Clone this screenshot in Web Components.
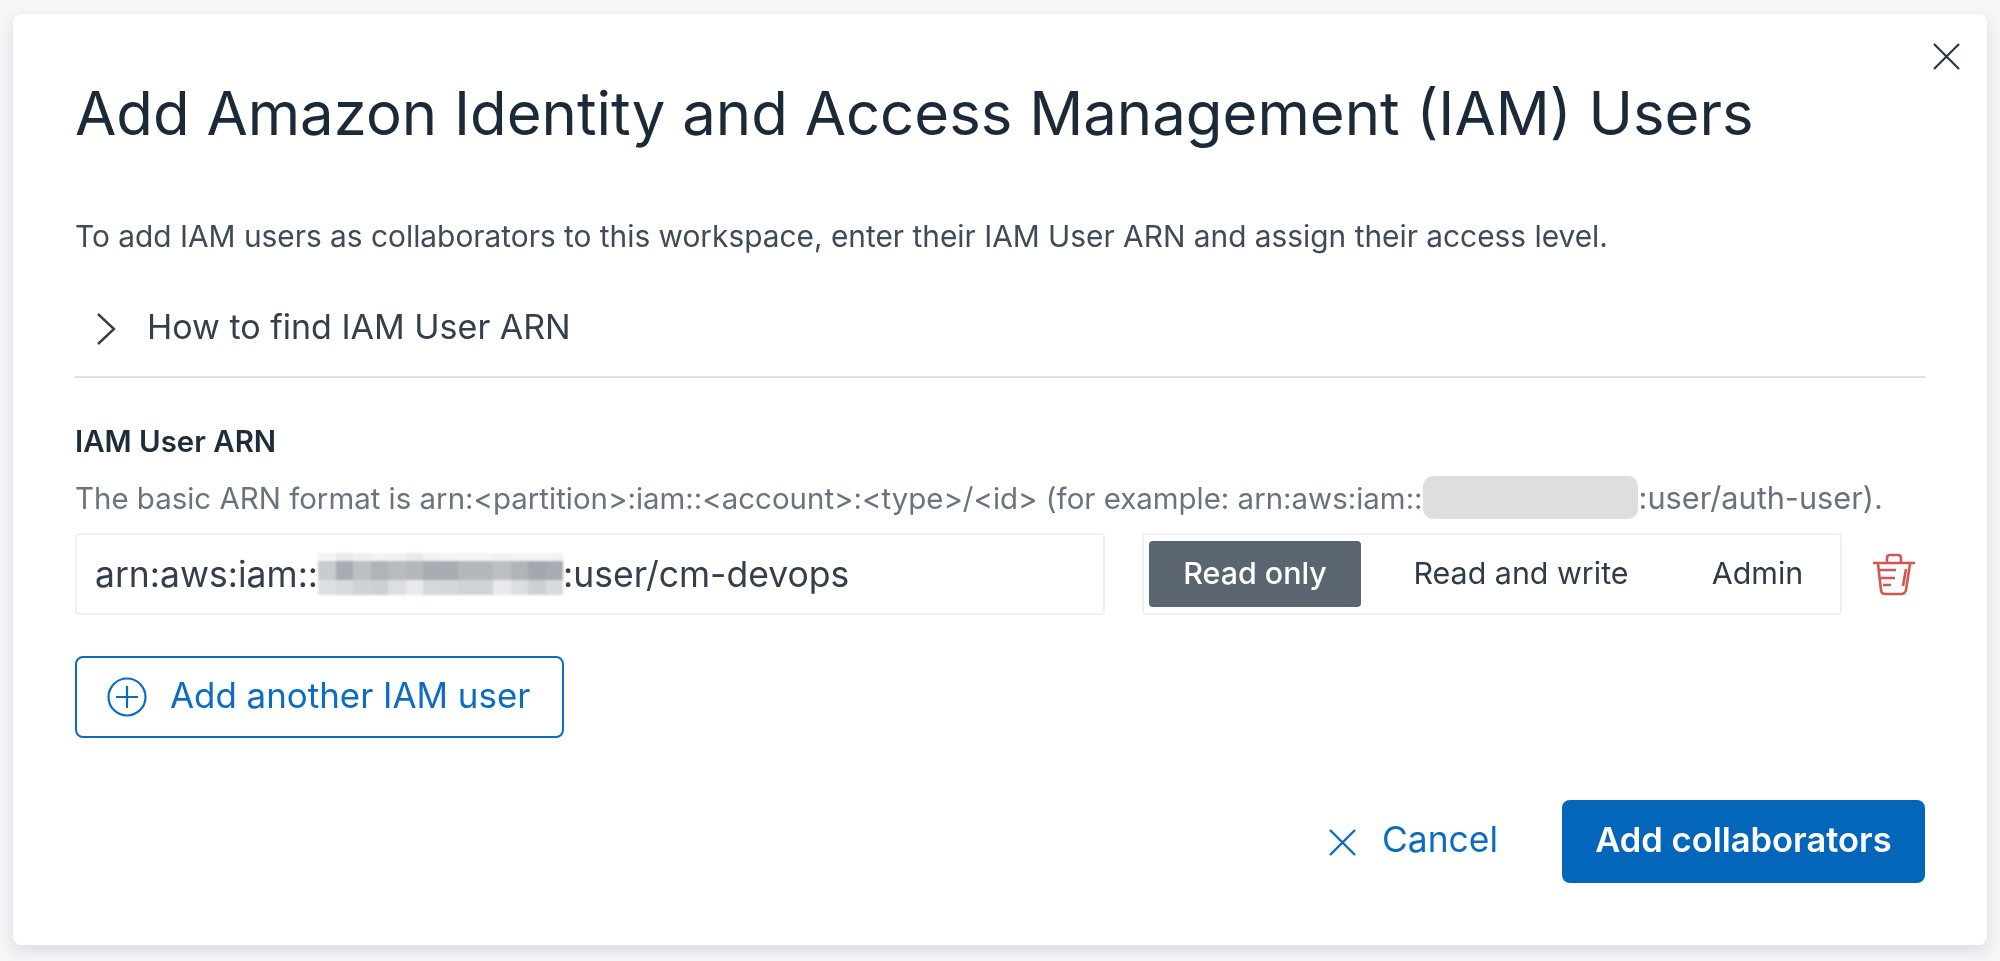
<!DOCTYPE html>
<html>
<head>
<meta charset="utf-8">
<title>Add IAM users</title>
<style>
  html, body { margin: 0; height: 100%; }
  body {
    background: #f5f6f8;
    font-family: Inter, "Liberation Sans", sans-serif;
    color: #1c2b39;
    overflow: hidden;
  }
</style>
</head>
<body>
<iam-modal>
  <span slot="title">Add Amazon Identity and Access Management (IAM) Users</span>
  <span slot="intro">To add IAM users as collaborators to this workspace, enter their IAM User ARN and assign their access level.</span>
  <help-toggle>How to find IAM User ARN</help-toggle>
  <arn-row></arn-row>
  <add-user-button>Add another IAM user</add-user-button>
  <modal-footer></modal-footer>
</iam-modal>

<script>
class IamModal extends HTMLElement {
  constructor() {
    super();
    this.attachShadow({ mode: "open" });
    this.shadowRoot.innerHTML = `
    <style>
      :host {
        display: block;
        box-sizing: border-box;
        position: relative;
        margin: 14px 13px 0;
        height: 931px;
        padding: 0 62px;
        background: #fff;
        border-radius: 8px;
        box-shadow: 0 0 2px #e6e8ec, 0 6px 14px #d9dce1;
        filter: blur(.4px);
      }
      .close { position: absolute; top: 29px; right: 27px; width: 27px; height: 27px; }
      h1 {
        margin: 0;
        padding-top: 64px;
        font-size: 59.85px;
        line-height: 70px;
        font-weight: 400;
        color: #1a2a38;
        white-space: nowrap;
      }
      p {
        margin: 70px 0 0;
        font-size: 29.85px;
        line-height: 36px;
        color: #3f4b58;
        white-space: nowrap;
      }
    </style>
    <svg class="close" viewBox="0 0 27 27" fill="none" stroke="#2b3844" stroke-width="2.2"><path d="M1 1l25 25M26 1L1 26"/></svg>
    <h1><slot name="title"></slot></h1>
    <p><slot name="intro"></slot></p>
    <slot></slot>`;
  }
}

class HelpToggle extends HTMLElement {
  constructor() {
    super();
    this.attachShadow({ mode: "open" });
    this.shadowRoot.innerHTML = `
    <style>
      :host {
        display: flex;
        align-items: center;
        height: 101px;
        box-sizing: border-box;
        border-bottom: 2px solid #dcdfe3;
        font-size: 34px;
        color: #343f4b;
        margin-top: 23px;
      }
      svg { width: 20px; height: 32px; margin: 4px 31px 0 21px; flex: none; }
    </style>
    <svg viewBox="0 0 20 32" fill="none" stroke="#343f4b" stroke-width="2.4"><path d="M2 1l16 15L2 31"/></svg>
    <slot></slot>`;
  }
}

class SegmentedControl extends HTMLElement {
  constructor() {
    super();
    this.attachShadow({ mode: "open" });
    this.shadowRoot.innerHTML = `
    <style>
      :host {
        display: flex;
        box-sizing: border-box;
        width: 700px;
        height: 82px;
        padding: 6px 0 6px 5px;
        background: #fff;
        border: 2px solid #eef0f5;
        border-radius: 4px;
        font-size: 30.4px;
        color: #2f3b48;
      }
      span { display: flex; align-items: center; justify-content: center; border-radius: 4px; flex: none; padding-bottom: 2px; box-sizing: border-box; }
      .on { width: 212px; background: #5a6570; color: #fff; font-weight: 500; }
      .rw { width: 320px; }
      .ad { width: 153px; }
    </style>
    <span class="on">Read only</span>
    <span class="rw">Read and write</span>
    <span class="ad">Admin</span>`;
  }
}

class BlurPatch extends HTMLElement {
  constructor() {
    super();
    this.attachShadow({ mode: "open" });
    // mosaic of the redacted account number
    const rows = [
      "f4f4f6 e8eaec eeeff1 f2f3f4 f0f1f2 e8e9ed f2f3f5 f4f5f6 f4f5f6 f4f5f6 eef0f1 f3f4f5 f4f5f6 f2f3f4",
      "c8ccd0 a8acb2 bcc0c4 b0b4b8 b8bcc0 b4b8bc a8acb2 a8acb2 b4b8bc b4b8bc bcc0c4 b0b4b8 a4a8ae a8acb2",
      "dde0e2 d8dbde cfd2d5 ccd0d3 dcdfe1 e8e9ec d6d9dc d4d7da d0d3d6 d0d3d6 e8eaec dcdfe1 cdd0d3 d8dbde"
    ];
    const cells = rows.map(r => r.split(" ").map(c => `<i style="background:#${c}"></i>`).join("")).join("");
    this.shadowRoot.innerHTML = `
    <style>
      :host {
        display: grid;
        grid-template-columns: repeat(14, 1fr);
        grid-template-rows: 8px 19px 15px;
        width: 245px;
        height: 42px;
        flex: none;
        filter: blur(.8px);
      }
      i { display: block; }
    </style>
    ${cells}`;
  }
}

class ArnRow extends HTMLElement {
  constructor() {
    super();
    this.attachShadow({ mode: "open" });
    this.shadowRoot.innerHTML = `
    <style>
      :host { display: block; }
      .label {
        padding-top: 44px;
        font-size: 29.4px;
        line-height: 40px;
        font-weight: 600;
        color: #1f2d3a;
      }
      .hint {
        display: flex;
        align-items: center;
        height: 43px;
        margin-top: 14px;
        font-size: 29.45px;
        color: #69737e;
        white-space: pre;
      }
      .hint .tail { font-size: 30.7px; }
      .mask { width: 215px; height: 43px; background: #dedede; border-radius: 10px; margin-right: 1px; flex: none; }
      .row { display: flex; align-items: center; margin-top: 14px; }
      .input {
        display: flex;
        align-items: center;
        box-sizing: border-box;
        width: 1030px;
        height: 82px;
        padding: 0 18px;
        margin-right: 37px;
        border: 2px solid #eef0f5;
        border-radius: 4px;
        font-size: 35.5px;
        color: #343f4b;
      }
      .trash { width: 44px; height: 44px; margin-left: 30px; flex: none; }
    </style>
    <div class="label">IAM User ARN</div>
    <div class="hint"><span>The basic ARN format is arn:&lt;partition&gt;:iam::&lt;account&gt;:&lt;type&gt;/&lt;id&gt; (for example: arn:aws:iam::</span><span class="mask"></span><span class="tail">:user/auth-user).</span></div>
    <div class="row">
      <div class="input"><span>arn:aws:iam::</span><blur-patch></blur-patch><span>:user/cm-devops</span></div>
      <segmented-control></segmented-control>
      <svg class="trash" viewBox="0 0 44 44" fill="none" stroke="#d2574f" stroke-width="2.6" stroke-linejoin="round">
        <path d="M1 11h42"/>
        <path d="M15 10V6q0-3 3-3h8q3 0 3 3v4"/>
        <path d="M6 12l3 26q.5 4 4 4h16q4 0 5-4l4-26"/>
        <path d="M7 18h17M9 26h14M11 33h8"/>
        <path d="M34 17l-3 17"/>
      </svg>
    </div>`;
  }
}

class AddUserButton extends HTMLElement {
  constructor() {
    super();
    this.attachShadow({ mode: "open" });
    this.shadowRoot.innerHTML = `
    <style>
      :host {
        display: flex;
        align-items: center;
        box-sizing: border-box;
        width: 489px;
        height: 82px;
        margin-top: 41px;
        padding-left: 30px;
        border: 2px solid #0b6cc4;
        border-radius: 8px;
        font-size: 34.9px;
        font-weight: 400;
        color: #0b6cc4;
      }
      svg { width: 40px; height: 40px; margin-right: 23px; flex: none; }
      span { padding-bottom: 4px; }
    </style>
    <svg viewBox="0 0 40 40" fill="none" stroke="#0b6cc4" stroke-width="2.2"><circle cx="20" cy="20" r="18.5"/><path d="M20 9v22M9 20h22"/></svg>
    <span><slot></slot></span>`;
  }
}

class ModalFooter extends HTMLElement {
  constructor() {
    super();
    this.attachShadow({ mode: "open" });
    this.shadowRoot.innerHTML = `
    <style>
      :host {
        display: flex;
        justify-content: flex-end;
        align-items: center;
        margin-top: 62px;
        font-size: 35.4px;
        font-weight: 400;
      }
      .cancel { display: flex; align-items: center; color: #0b6cc4; margin-right: 64px; }
      .cancel svg { width: 27px; height: 27px; margin: 2px 26px 0 0; }
      .cancel span { padding-bottom: 4px; }
      .primary {
        display: flex;
        align-items: center;
        justify-content: center;
        box-sizing: border-box;
        width: 363px;
        height: 83px;
        padding-bottom: 4px;
        background: #0366bb;
        color: #fff;
        border-radius: 8px;
        font-weight: 600;
        font-size: 34.5px;
      }
    </style>
    <div class="cancel">
      <svg viewBox="0 0 27 27" fill="none" stroke="#0b6cc4" stroke-width="2.4"><path d="M1 1l25 25M26 1L1 26"/></svg>
      <span>Cancel</span>
    </div>
    <div class="primary">Add collaborators</div>`;
  }
}

customElements.define("iam-modal", IamModal);
customElements.define("help-toggle", HelpToggle);
customElements.define("segmented-control", SegmentedControl);
customElements.define("blur-patch", BlurPatch);
customElements.define("arn-row", ArnRow);
customElements.define("add-user-button", AddUserButton);
customElements.define("modal-footer", ModalFooter);
</script>
</body>
</html>
